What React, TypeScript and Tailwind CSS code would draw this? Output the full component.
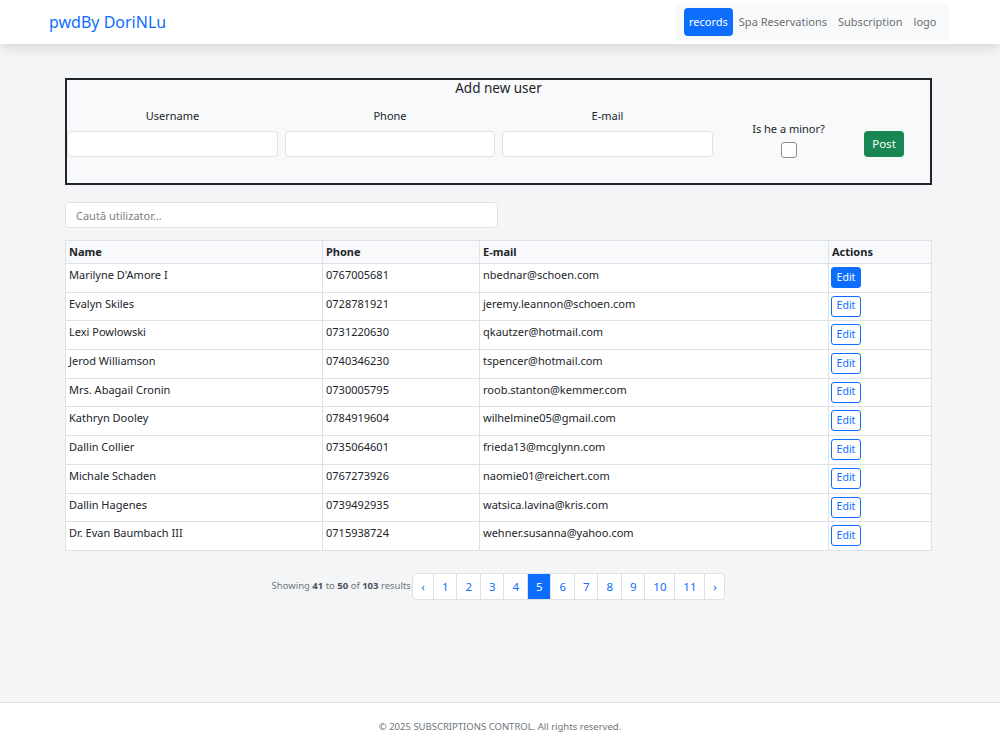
import React from "react";

const users = [
  { name: "Marilyne D'Amore I", phone: "0767005681", email: "nbednar@schoen.com" },
  { name: "Evalyn Skiles", phone: "0728781921", email: "jeremy.leannon@schoen.com" },
  { name: "Lexi Powlowski", phone: "0731220630", email: "qkautzer@hotmail.com" },
  { name: "Jerod Williamson", phone: "0740346230", email: "tspencer@hotmail.com" },
  { name: "Mrs. Abagail Cronin", phone: "0730005795", email: "roob.stanton@kemmer.com" },
  { name: "Kathryn Dooley", phone: "0784919604", email: "wilhelmine05@gmail.com" },
  { name: "Dallin Collier", phone: "0735064601", email: "frieda13@mcglynn.com" },
  { name: "Michale Schaden", phone: "0767273926", email: "naomie01@reichert.com" },
  { name: "Dallin Hagenes", phone: "0739492935", email: "watsica.lavina@kris.com" },
  { name: "Dr. Evan Baumbach III", phone: "0715938724", email: "wehner.susanna@yahoo.com" },
];

const pages = ["‹", "1", "2", "3", "4", "5", "6", "7", "8", "9", "10", "11", "›"];

function Navbar() {
  return (
    <nav className="relative z-10 flex h-[44px] items-center justify-between bg-white pl-[49px] pr-[51px] shadow-[0_4px_12px_rgba(0,0,0,0.12)]">
      <a className="text-[16px] text-[#0d6efd]">pwdBy DoriNLu</a>
      <div className="flex h-[38px] items-center bg-[#f8f9fa] pl-[8px] pr-[7px] text-[11px] text-[#6b6f73]">
        <span className="rounded-[4px] bg-[#0d6efd] px-[5.5px] py-[5px] leading-[18px] text-white">records</span>
        <span className="px-[5.5px]">Spa Reservations</span>
        <span className="px-[5.5px]">Subscription</span>
        <span className="px-[5.5px]">logo</span>
      </div>
    </nav>
  );
}

function AddUserForm() {
  const input = "h-[26px] w-full rounded-[4px] border border-[#dee2e6] bg-white";
  return (
    <div className="h-[107px] border-2 border-[#212529] bg-[#f8f9fa]">
      <h2 className="mt-[-2px] text-center text-[13.5px] leading-[20px] text-[#212529]">Add new user</h2>
      <div className="mt-[9px] grid grid-cols-[211px_210px_211px_137px_40px] items-end gap-[7px] text-[11px] text-[#212529]">
        <div className="flex flex-col items-center gap-[7px]">
          <label className="leading-[17px]">Username</label>
          <input className={input} />
        </div>
        <div className="flex flex-col items-center gap-[7px]">
          <label className="leading-[17px]">Phone</label>
          <input className={input} />
        </div>
        <div className="flex flex-col items-center gap-[7px]">
          <label className="leading-[17px]">E-mail</label>
          <input className={input} />
        </div>
        <div className="flex flex-col items-center gap-[5px]">
          <label className="leading-[17px]">Is he a minor?</label>
          <span className="mb-[-1px] block h-[16px] w-[16px] rounded-[3px] border border-[#8a8f94] bg-white" />
        </div>
        <button className="h-[26px] rounded-[4px] bg-[#198754] text-[11.5px] text-white">Post</button>
      </div>
    </div>
  );
}

function UsersTable() {
  return (
    <table className="mt-[12px] w-full border-collapse border border-[#dee2e6] bg-white text-left text-[11px] text-[#212529]">
      <thead>
        <tr className="h-[23px] bg-[#f8f9fa]">
          <th className="w-[257px] border border-[#dee2e6] px-[3px] font-bold">Name</th>
          <th className="w-[157px] border border-[#dee2e6] px-[3px] font-bold">Phone</th>
          <th className="w-[349px] border border-[#dee2e6] px-[3px] font-bold">E-mail</th>
          <th className="border border-[#dee2e6] px-[3px] font-bold">Actions</th>
        </tr>
      </thead>
      <tbody>
        {users.map((u, i) => (
          <tr key={u.email} className="h-[28.7px]">
            <td className="border border-[#dee2e6] px-[3px] pt-[2px] align-top leading-[18px]">{u.name}</td>
            <td className="border border-[#dee2e6] px-[3px] pt-[2px] align-top leading-[18px]">{u.phone}</td>
            <td className="border border-[#dee2e6] px-[3px] pt-[2px] align-top leading-[18px]">{u.email}</td>
            <td className="border border-[#dee2e6] px-[2px] py-[3px] align-top">
              <button
                className={
                  i === 0
                    ? "h-[21px] w-[30px] rounded-[3px] border border-[#0d6efd] bg-[#0d6efd] text-[10.5px] text-white"
                    : "h-[21px] w-[30px] rounded-[3px] border border-[#0d6efd] bg-white text-[10.5px] text-[#0d6efd]"
                }
              >
                Edit
              </button>
            </td>
          </tr>
        ))}
      </tbody>
    </table>
  );
}

function Pagination() {
  return (
    <div className="mt-[22px] flex items-center justify-center text-[9.5px]">
      <span className="mr-[1px] text-[#6c757d]">
        Showing <b className="text-[#495057]">41</b> to <b className="text-[#495057]">50</b> of{" "}
        <b className="text-[#495057]">103</b> results
      </span>
      <div className="flex h-[27px] overflow-hidden rounded-[4px] border border-[#dee2e6] bg-white">
        {pages.map((p, i) => (
          <span
            key={i}
            className={
              "flex items-center justify-center border-l border-[#dee2e6] text-[11.5px] first:border-l-0 " +
              (p === "‹" || p === "›" ? "w-[20px] " : p.length > 1 ? "w-[30px] " : "w-[23.5px] ") +
              (p === "5" ? "bg-[#0d6efd] text-white" : "text-[#0d6efd]")
            }
          >
            {p}
          </span>
        ))}
      </div>
    </div>
  );
}

export default function App() {
  return (
    <div className="flex min-h-[751px] flex-col bg-[#f4f5f7] font-['Noto_Sans',sans-serif]">
      <Navbar />
      <main className="flex-1 pt-[34px]">
        <div className="ml-[65px] w-[867px]">
          <AddUserForm />
          <input
            className="mt-[17px] h-[26px] w-[433px] rounded-[4px] border border-[#dee2e6] bg-white px-[10px] text-[11px] placeholder:text-[#7b8087]"
            placeholder="Caută utilizator..."
          />
          <UsersTable />
          <Pagination />
        </div>
      </main>
      <footer className="flex h-[49px] items-center justify-center border-t border-[#dee2e6] bg-white text-[9.5px] text-[#6c757d]">
        © 2025 SUBSCRIPTIONS CONTROL. All rights reserved.
      </footer>
    </div>
  );
}
